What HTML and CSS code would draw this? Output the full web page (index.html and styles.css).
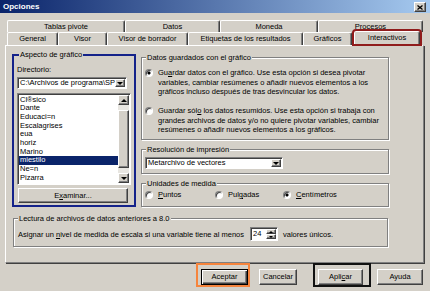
FILE: index.html
```html
<!DOCTYPE html>
<html>

<head>
	<meta charset="utf-8">
	<title>Opciones</title>
	<link rel="stylesheet" href="styles.css">
</head>

<body>
	<div class="dialog">
		<div class="titlebar">
			<span class="title">Opciones</span>
			<span class="close">
				<svg width="6" height="5" viewBox="0 0 6 5"><path d="M0.5 0.5L5.5 4.5M5.5 0.5L0.5 4.5" stroke="#000" stroke-width="1.3"/></svg>
			</span>
		</div>

		<div class="tabs">
			<div class="tabrow back">
				<div class="tab">Tablas pivote</div>
				<div class="tab">Datos</div>
				<div class="tab">Moneda</div>
				<div class="tab">Procesos</div>
			</div>
			<div class="tabrow front">
				<div class="tab">General</div>
				<div class="tab">Visor</div>
				<div class="tab">Visor de borrador</div>
				<div class="tab">Etiquetas de los resultados</div>
				<div class="tab">Gráficos</div>
				<div class="tab active">Interactivos</div>
			</div>
		</div>

		<div class="panel">
			<fieldset class="group look">
				<legend>Aspecto de gráfico</legend>
				<div class="label">Directorio:</div>
				<div class="combo">
					<span class="value">C:\Archivos de programa\SP</span>
					<span class="dropbtn"><i class="down"></i></span>
				</div>
				<div class="list">
					<div class="items">
						<div>Cl®sico</div>
						<div>Dante</div>
						<div>Educaci=n</div>
						<div>Escalagrises</div>
						<div>eua</div>
						<div>horiz</div>
						<div>Marino</div>
						<div class="sel">miestilo</div>
						<div>Ne=n</div>
						<div>Pizarra</div>
					</div>
					<div class="scrollbar">
						<span class="arrow"><i class="up"></i></span>
						<div class="track"><div class="thumb"></div></div>
						<span class="arrow"><i class="down"></i></span>
					</div>
				</div>
				<div class="btn browse">E<u>x</u>aminar...</div>
			</fieldset>

			<div class="right">
				<fieldset class="group saved">
					<legend>Datos guardados con el gráfico</legend>
					<div class="option">
						<span class="radio on"></span>
						<span>Gu<u>a</u>rdar datos con el gráfico. Use esta opción si desea pivotar<br>variables, cambiar resúmenes o añadir nuevos elementos a los<br>gráficos incluso después de tras desvincular los datos.</span>
					</div>
					<div class="option">
						<span class="radio"></span>
						<span>Guardar sól<u>o</u> los datos resumidos. Use esta opción si trabaja con<br>grandes archivos de datos y/o no quiere pivotar variables, cambiar<br>resúmenes o añadir nuevos elementos a los gráficos.</span>
					</div>
				</fieldset>

				<fieldset class="group res">
					<legend>Resolución de impresión</legend>
					<div class="combo select">
						<span class="value">Metarchivo de vectores</span>
						<span class="dropbtn"><i class="down"></i></span>
					</div>
				</fieldset>

				<fieldset class="group units">
					<legend>Unidades de medida</legend>
					<div class="unitrow">
						<div class="option"><span class="radio"></span><span><u>P</u>untos</span></div>
						<div class="option"><span class="radio"></span><span>Pul<u>g</u>adas</span></div>
						<div class="option"><span class="radio on"></span><span><u>C</u>entímetros</span></div>
					</div>
				</fieldset>
			</div>

			<fieldset class="group legacy">
				<legend>Lectura de archivos de datos anteriores a 8.0</legend>
				<div class="scalerow">
					<span>Asignar un <u>n</u>ivel de medida de escala si una variable tiene al menos</span>
					<div class="spin">
						<span class="value">24</span>
						<span class="spinbtns">
							<span class="arrow"><i class="up small"></i></span>
							<span class="arrow"><i class="down small"></i></span>
						</span>
					</div>
					<span class="after">valores únicos.</span>
				</div>
			</fieldset>
		</div>

		<div class="actions">
			<div class="mark orange">
				<div class="btn default ok">Aceptar</div>
			</div>
			<div class="btn cancel">Cancelar</div>
			<div class="mark black">
				<div class="btn apply">Apli<u>c</u>ar</div>
			</div>
			<div class="btn help">Ayuda</div>
		</div>
	</div>
</body>

</html>
```

FILE: styles.css
```css
* {
	box-sizing: border-box;
}

body {
	margin: 0;
	background-color: #d4d0c8;
	color: #000;
	font-family: "Liberation Sans", Arial, sans-serif;
	font-size: 7.5px;
	line-height: 9px;
	overflow: hidden;
}

u {
	text-underline-offset: 1px;
}

.dialog {
	width: 430px;
	height: 291px;
}

/* Title bar */
.titlebar {
	display: flex;
	justify-content: space-between;
	align-items: flex-start;
	height: 13px;
	background: linear-gradient(to right, #0a246a, #a6caf0);
}

.title {
	color: #fff;
	font-weight: bold;
	font-size: 8px;
	line-height: 13px;
	padding-left: 3px;
}

.close {
	display: flex;
	align-items: center;
	justify-content: center;
	width: 12px;
	height: 10px;
	margin: 2px 4px 0 0;
	background: #d4d0c8;
	border: 1px solid;
	border-color: #fff #404040 #404040 #fff;
	box-shadow: inset -1px -1px #808080;
}

/* Tabs */
.tabs {
	padding: 7px 0 0 7px;
}

.tabrow {
	display: grid;
	height: 12px;
}

.tabrow.back {
	grid-template-columns: 118px 95px 98px 105px;
}

.tabrow.front {
	grid-template-columns: 51px 49px 81px 115px 49px 69px;
	height: 13px;
}

.tab {
	text-align: center;
	line-height: 11px;
	white-space: nowrap;
	background: #d4d0c8;
	border-top: 1px solid #fff;
	border-left: 1px solid #fff;
	border-right: 1px solid #404040;
	border-radius: 2px 2px 0 0;
	box-shadow: inset -1px 0 #808080;
}

.front .tab {
	line-height: 12px;
}

.tab.active {
	position: relative;
	z-index: 1;
	height: 13px;
	margin: -1px 1px 0 2px;
	outline: 2px solid #901c1c;
}

/* Page panel */
.panel {
	display: grid;
	grid-template-columns: 124px 248px;
	column-gap: 5px;
	row-gap: 7px;
	align-content: start;
	width: 419px;
	height: 218px;
	margin-left: 5px;
	padding: 4px 0 0 6px;
	border: 1px solid;
	border-color: #fff #808080 #808080 #fff;
	box-shadow: 1px 1px 0 #404040;
}

.group {
	margin: 0;
	padding: 0;
	min-width: 0;
	border: 1px solid #808080;
	box-shadow: inset 1px 1px #fff, 1px 1px #fff;
}

.group legend {
	margin-left: 1px;
	padding: 0 1px;
	line-height: 9px;
	background: #d4d0c8;
}

/* Chart look group, with the blue mark round it */
.look {
	height: 157px;
	padding: 6px 3px 0;
	border: 2px solid #14228a;
	box-shadow: none;
}

.look legend {
	margin-left: 2px;
}

.combo {
	display: flex;
	width: 110px;
	height: 12px;
	margin-top: 3px;
	padding: 1px;
	background: #fff;
	border: 1px solid;
	border-color: #808080 #fff #fff #808080;
	box-shadow: inset 1px 1px #404040;
}

.combo .value {
	flex: 1;
	overflow: hidden;
	white-space: nowrap;
	line-height: 8px;
	padding-left: 1px;
}

.dropbtn,
.arrow {
	display: flex;
	flex: none;
	align-items: center;
	justify-content: center;
	width: 10px;
	background: #d4d0c8;
	border: 1px solid;
	border-color: #fff #404040 #404040 #fff;
	box-shadow: inset -1px -1px #808080;
}

.down,
.up {
	width: 0;
	height: 0;
	border-left: 3px solid transparent;
	border-right: 3px solid transparent;
}

.down {
	border-top: 3px solid #000;
}

.up {
	border-bottom: 3px solid #000;
}

.down.small {
	border-width: 2px 2px 0;
}

.up.small {
	border-width: 0 2px 2px;
}

.list {
	display: flex;
	height: 92px;
	margin-top: 4px;
	padding: 1px;
	background: #fff;
	border: 1px solid;
	border-color: #808080 #fff #fff #808080;
	box-shadow: inset 1px 1px #404040;
}

.items {
	flex: 1;
	overflow: hidden;
	padding-top: 0.5px;
	line-height: 8.7px;
}

.items div {
	padding-left: 1px;
	white-space: nowrap;
}

.items .sel {
	background: #0a246a;
	color: #fff;
}

.scrollbar {
	display: flex;
	flex-direction: column;
	width: 11px;
	background: #e8e6e1;
}

.scrollbar .arrow {
	width: 11px;
	height: 10px;
}

.track {
	flex: 1;
	padding: 5px 0;
}

.thumb {
	height: 58px;
	background: #d4d0c8;
	border: 1px solid;
	border-color: #fff #404040 #404040 #fff;
	box-shadow: inset -1px -1px #808080;
}

.btn {
	height: 16px;
	text-align: center;
	line-height: 14px;
	background: #d4d0c8;
	border: 1px solid;
	border-color: #fff #404040 #404040 #fff;
	box-shadow: inset -1px -1px #808080;
}

.browse {
	width: 110px;
	height: 15px;
	margin: 3px 0 0 1px;
	line-height: 13px;
}

/* Right column groups */
.right {
	display: flex;
	flex-direction: column;
	gap: 5px;
	padding-top: 3px;
}

.saved {
	height: 87px;
	padding: 6px 0 0 3px;
}

.option {
	display: flex;
	gap: 5px;
	line-height: 9.5px;
}

.saved .option + .option {
	margin-top: 9.5px;
}

.radio {
	flex: none;
	width: 8px;
	height: 8px;
	margin-top: 1px;
	border-radius: 50%;
	background: #fff;
	border: 1px solid;
	border-color: #808080 #fff #fff #808080;
	box-shadow: inset 1px 1px #404040;
}

.radio.on {
	background: radial-gradient(circle, #000 0 1.3px, #fff 1.8px);
}

.res {
	height: 29px;
	padding: 3px 0 0 3px;
}

.combo.select {
	width: 138px;
	margin-top: 0;
}

.units {
	height: 28px;
	padding: 2px 0 0 3px;
}

.unitrow {
	display: grid;
	grid-template-columns: 70px 68px auto;
}

.unitrow .option {
	line-height: 9px;
}

.unitrow .radio {
	margin-top: 0.5px;
}

/* Old data files group */
.legacy {
	grid-column: 1 / -1;
	height: 33px;
	margin: 0 1px;
	padding: 4px 0 0 4px;
}

.legacy legend {
	margin-left: 0;
}

.scalerow {
	display: flex;
	align-items: center;
	height: 14px;
}

.spin {
	display: flex;
	width: 28px;
	height: 14px;
	margin-left: 6px;
	padding: 1px;
	background: #fff;
	border: 1px solid;
	border-color: #808080 #fff #fff #808080;
	box-shadow: inset 1px 1px #404040;
}

.spin .value {
	flex: 1;
	line-height: 10px;
	padding-left: 1px;
}

.spinbtns {
	display: flex;
	flex-direction: column;
}

.spinbtns .arrow {
	flex: 1;
	width: 10px;
}

.after {
	margin-left: 5px;
}

/* Dialog buttons */
.actions {
	display: flex;
	justify-content: flex-end;
	align-items: flex-start;
	padding-right: 7px;
}

.mark {
	width: 54px;
	height: 24px;
	padding: 4px 0 0 3px;
	border: 2px solid;
}

.mark.orange {
	border-color: #f6843c;
}

.mark.black {
	width: 58px;
	margin-left: 16px;
	border-color: #111;
}

.ok {
	width: 47px;
}

.btn.default {
	border-color: #000;
	box-shadow: inset 1px 1px #fff, inset -1px -1px #404040, inset -2px -2px #808080;
}

.cancel {
	width: 38px;
	margin: 6px 0 0 9px;
}

.apply {
	width: 45px;
}

.help {
	width: 46px;
	margin: 6px 0 0 6px;
}
```
